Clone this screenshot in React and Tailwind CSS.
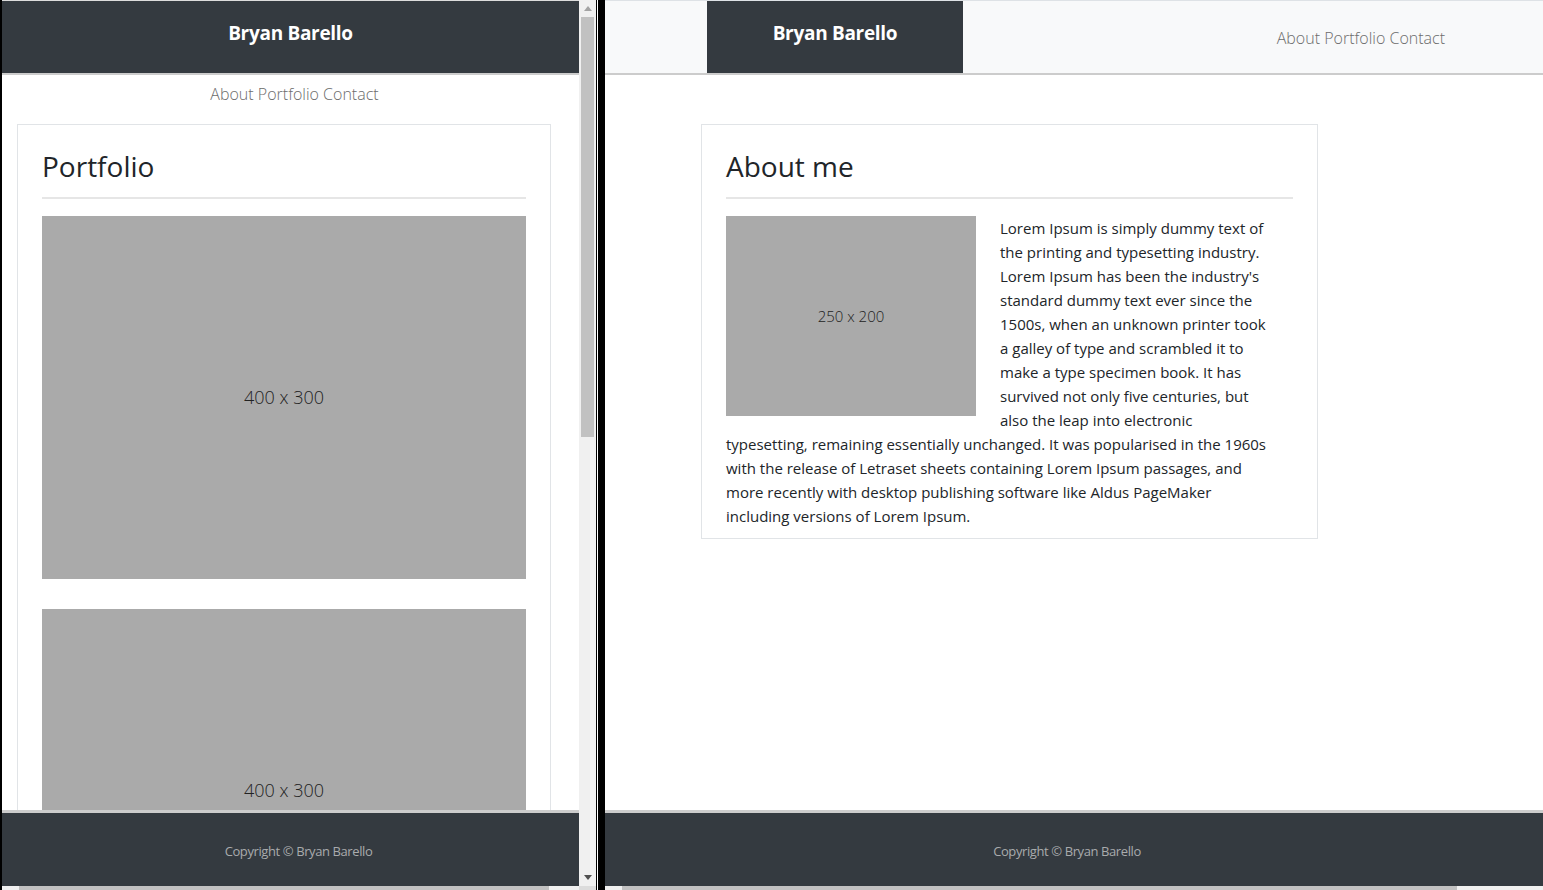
import React from 'react';

const font = "font-['Open_Sans','Noto_Sans',sans-serif]";

// lines broken where the reference breaks them
const loremLines = [
  'Lorem Ipsum is simply dummy text of',
  'the printing and typesetting industry.',
  "Lorem Ipsum has been the industry's",
  'standard dummy text ever since the',
  '1500s, when an unknown printer took',
  'a galley of type and scrambled it to',
  'make a type specimen book. It has',
  'survived not only five centuries, but',
  'also the leap into electronic',
  'typesetting, remaining essentially unchanged. It was popularised in the 1960s',
  'with the release of Letraset sheets containing Lorem Ipsum passages, and',
  'more recently with desktop publishing software like Aldus PageMaker',
  'including versions of Lorem Ipsum.',
];

const Placeholder = ({ label, className = '', textClass = '' }) => (
  <div className={`flex items-center justify-center bg-[#aaaaaa] text-[#222] font-light ${className}`}>
    <span className={textClass}>{label}</span>
  </div>
);

const Footer = ({ offset = '' }) => (
  <footer className="shrink-0">
    <div className="h-[3px] bg-[#cccccc]" />
    <div className={`h-[73px] bg-[#343a40] flex items-center justify-center pt-[5px] ${offset}`}>
      <span className="text-[13px] text-[#a9abad] tracking-[-0.4px]">Copyright © Bryan Barello</span>
    </div>
  </footer>
);

// bottom horizontal scrollbar strip
const HScroll = ({ thumbLeft, thumbWidth }) => (
  <div className="h-[4px] bg-[#f0f0f0] flex shrink-0">
    <div className={thumbLeft} />
    <div className={`${thumbWidth} bg-[#c1c1c1]`} />
  </div>
);

const MobileView = () => (
  <div className="w-[577px] h-full flex flex-col bg-white">
    <div className="h-px bg-[#dcdcdc] shrink-0" />
    {/* Header */}
    <header className="h-[72px] shrink-0 bg-[#343a40] flex items-center justify-center pb-[8px]">
      <span className="text-white font-bold text-[19px] tracking-[-0.3px]">Bryan Barello</span>
    </header>
    <div className="h-[2px] bg-[#cccccc] shrink-0" />

    <main className="flex-1 min-h-0 overflow-hidden">
      <nav className="pt-[7px] pl-[8px] text-center text-[16px] leading-[24px] font-light text-[#6c6c6c]">
        About Portfolio Contact
      </nav>
      {/* Portfolio card */}
      <section className="mt-[18px] ml-[15px] w-[534px] border border-[#e1e4e7] px-[24px] pt-[24px]">
        <h2 className="text-[28px] leading-[34px] text-[#212529] pb-[14px] border-b-2 border-[#e6e6e6]">Portfolio</h2>
        <Placeholder label="400 x 300" className="mt-[17px] h-[363px]" textClass="text-[18px]" />
        <Placeholder label="400 x 300" className="mt-[30px] h-[363px]" textClass="text-[18px]" />
      </section>
    </main>

    <Footer offset="pl-[16px]" />
    <HScroll thumbLeft="w-[17px]" thumbWidth="w-[530px]" />
  </div>
);

const VScroll = () => (
  <div className="w-[17px] h-full flex flex-col bg-[#f0f0f0]">
    <div className="h-[17px] flex items-center justify-center shrink-0">
      <svg width="8" height="5" viewBox="0 0 8 5">
        <polygon points="4,0 8,5 0,5" fill="#a3a3a3" />
      </svg>
    </div>
    <div className="h-[420px] mx-[2px] bg-[#c1c1c1] shrink-0" />
    <div className="flex-1" />
    <div className="h-[17px] flex items-center justify-center shrink-0">
      <svg width="8" height="5" viewBox="0 0 8 5">
        <polygon points="0,0 8,0 4,5" fill="#505050" />
      </svg>
    </div>
    <div className="h-[4px] bg-[#dcdcdc] shrink-0" />
  </div>
);

const DesktopView = () => (
  <div className="flex-1 h-full flex flex-col bg-white">
    <div className="h-px bg-[#dee2e6] shrink-0" />
    {/* Navbar */}
    <header className="h-[72px] shrink-0 bg-[#f8f9fa] flex items-stretch">
      <div className="ml-[102px] w-[256px] bg-[#343a40] flex items-center justify-center pb-[8px]">
        <span className="text-white font-bold text-[19px] tracking-[-0.3px]">Bryan Barello</span>
      </div>
      <div className="flex-1 flex items-center justify-end pr-[98px] pt-[2px]">
        <span className="text-[16px] font-light text-[#6c6c6c]">About Portfolio Contact</span>
      </div>
    </header>
    <div className="h-[2px] bg-[#cccccc] shrink-0" />

    <main className="flex-1 min-h-0 overflow-hidden">
      <section className="mt-[49px] ml-[96px] w-[617px] border border-[#e1e4e7] px-[24px] pt-[24px] pb-[10px]">
        <h2 className="text-[28px] leading-[34px] text-[#212529] pb-[14px] border-b-2 border-[#e6e6e6]">About me</h2>
        <div className="mt-[17px] text-[15px] leading-[24px] text-[#212529]">
          <Placeholder label="250 x 200" className="float-left w-[250px] h-[200px] mr-[24px]" textClass="text-[15px]" />
          <p className="whitespace-nowrap">
            {loremLines.map((line, i) => (
              <React.Fragment key={i}>
                {line}
                {i < loremLines.length - 1 && <br />}
              </React.Fragment>
            ))}
          </p>
        </div>
      </section>
    </main>

    <Footer offset="pr-[14px]" />
    <HScroll thumbLeft="w-[17px]" thumbWidth="w-[835px]" />
  </div>
);

const App = () => {
  return (
    <div className={`w-[1543px] h-[890px] bg-black flex overflow-hidden ${font}`}>
      <div className="w-[2px] shrink-0" />
      <MobileView />
      <VScroll />
      <div className="w-px shrink-0 bg-black" />
      <div className="w-px shrink-0 bg-white" />
      <div className="w-[7px] shrink-0 bg-black" />
      <DesktopView />
    </div>
  );
};

export default App;
